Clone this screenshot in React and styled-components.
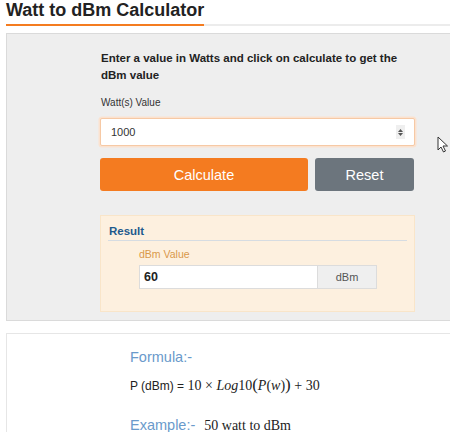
import React from "react";
import styled, { createGlobalStyle } from "styled-components";

const GlobalStyle = createGlobalStyle`
  html, body {
    margin: 0;
    padding: 0;
    background: #ffffff;
    overflow: hidden;
  }
  body {
    font-family: "Liberation Sans", Arial, sans-serif;
    color: #333;
  }
`;

const Page = styled.div`
  position: relative;
  width: 470px;
  height: 432px;
  overflow: hidden;
  padding-left: 6px;
`;

const Header = styled.div`
  border-bottom: 2px solid #ececec;
`;

const Title = styled.h2`
  display: inline-block;
  margin: 0 0 -2px;
  padding-bottom: 4px;
  font-size: 18px;
  line-height: 20px;
  font-weight: bold;
  color: #222;
  border-bottom: 2px solid #f47c20;
`;

const Panel = styled.section`
  margin-top: ${(p) => (p.$white ? "12px" : "7px")};
  background: ${(p) => (p.$white ? "#ffffff" : "#eeeeee")};
  border: 1px solid ${(p) => (p.$white ? "#e6e6e6" : "#dadada")};
  padding: ${(p) => (p.$white ? "14px 0 0 123px" : "16px 0 8px 93px")};
  min-height: ${(p) => (p.$white ? "120px" : "auto")};
`;

const Column = styled.div`
  width: 315px;
`;

const Intro = styled.p`
  margin: 0;
  font-size: 11.5px;
  line-height: 17px;
  font-weight: bold;
  color: #222;
  padding-left: 1px;
`;

const Label = styled.label`
  display: block;
  margin-top: 12px;
  padding-left: 1px;
  font-size: 10px;
  line-height: 14px;
  color: #333;
`;

const InputWrap = styled.div`
  margin-top: 8px;
  height: 28px;
  box-sizing: border-box;
  display: flex;
  align-items: center;
  background: #fff;
  border: 1px solid #f6c9a5;
  box-shadow: 0 0 0 1.5px #fbe2cf;
  border-radius: 2px;
  padding: 0 9px 0 10px;
`;

const TextInput = styled.input`
  flex: 1;
  min-width: 0;
  border: none;
  outline: none;
  background: transparent;
  font-family: inherit;
  font-size: 11px;
  color: #333;
  padding: 0;
`;

const Spinner = styled.span`
  width: 9px;
  height: 14px;
  background: #efefef;
  display: flex;
  flex-direction: column;
  align-items: center;
  justify-content: center;
  gap: 1px;
`;

const Buttons = styled.div`
  margin-top: 12px;
  display: grid;
  grid-template-columns: 208px 99px;
  gap: 7px;
`;

const Button = styled.button`
  height: 33px;
  border: none;
  border-radius: 3px;
  background: ${(p) => (p.$variant === "reset" ? "#6c757d" : "#f47b20")};
  color: #fff;
  font-family: inherit;
  font-size: 14.5px;
  cursor: pointer;
`;

const ResultBox = styled.div`
  margin-top: 24px;
  background: #fdf0df;
  border: 1px solid #f9e5c9;
  padding: 8px 7px 22px 7px;
`;

const Legend = styled.div`
  font-size: 11.5px;
  line-height: 14px;
  font-weight: bold;
  color: #1f5a8d;
  padding: 0 0 2px 1px;
  border-bottom: 1px solid #d6dce2;
`;

const ResultInner = styled.div`
  padding-left: 31px;
  width: 238px;
`;

const ResultLabel = styled.div`
  margin-top: 6px;
  font-size: 10.5px;
  line-height: 14px;
  color: #d9984a;
`;

const Group = styled.div`
  margin-top: 4px;
  display: flex;
  height: 24px;
`;

const Output = styled.div`
  flex: 1;
  background: #fff;
  border: 1px solid #dcdcdc;
  border-right: none;
  display: flex;
  align-items: center;
  padding-left: 4px;
  font-size: 12.5px;
  font-weight: bold;
  color: #222;
`;

const Addon = styled.div`
  width: 60px;
  box-sizing: border-box;
  background: #efefef;
  border: 1px solid #dcdcdc;
  display: flex;
  align-items: center;
  justify-content: center;
  font-size: 11px;
  color: #555;
`;

const Heading = styled.div`
  font-size: 14.5px;
  line-height: 18px;
  color: #6a9acb;
`;

const FormulaLine = styled.div`
  margin-top: 10px;
  display: flex;
  align-items: baseline;
  color: #222;
`;

const Sans = styled.span`
  font-size: 12px;
  white-space: pre;
`;

const MathText = styled.span`
  font-family: "Liberation Serif", "Times New Roman", serif;
  font-size: 14px;
  white-space: pre;
  i {
    font-style: italic;
  }
`;

const Paren = styled.span`
  font-size: 17px;
  line-height: 1;
`;

const ExampleRow = styled.div`
  margin-top: 22px;
  display: flex;
  align-items: baseline;
`;

const ExampleText = styled.span`
  font-family: "Liberation Serif", "Times New Roman", serif;
  font-size: 14px;
  color: #222;
  margin-left: 9px;
`;

const Cursor = styled.svg`
  position: absolute;
  left: 437px;
  top: 136px;
`;

const Arrow = ({ up }) => (
  <svg width="5" height="3" viewBox="0 0 5 3">
    <path d={up ? "M0 3 L2.5 0 L5 3 Z" : "M0 0 L2.5 3 L5 0 Z"} fill="#555" />
  </svg>
);

const App = () => {
  return (
    <Page>
      <GlobalStyle />
      <Header>
        <Title>Watt to dBm Calculator</Title>
      </Header>

      <Panel>
        <Column>
          <Intro>
            Enter a value in Watts and click on calculate to get the dBm value
          </Intro>
          <Label>Watt(s) Value</Label>
          <InputWrap>
            <TextInput defaultValue="1000" />
            <Spinner>
              <Arrow up />
              <Arrow />
            </Spinner>
          </InputWrap>
          <Buttons>
            <Button>Calculate</Button>
            <Button $variant="reset">Reset</Button>
          </Buttons>
          <ResultBox>
            <Legend>Result</Legend>
            <ResultInner>
              <ResultLabel>dBm Value</ResultLabel>
              <Group>
                <Output>60</Output>
                <Addon>dBm</Addon>
              </Group>
            </ResultInner>
          </ResultBox>
        </Column>
      </Panel>

      <Panel $white>
        <Heading>Formula:-</Heading>
        <FormulaLine>
          <Sans>P (dBm) = </Sans>
          <MathText>
            10 × <i>Log</i>10<Paren>(</Paren><i>P</i>(<i>w</i>)<Paren>)</Paren> + 30
          </MathText>
        </FormulaLine>
        <ExampleRow>
          <Heading as="span">Example:-</Heading>
          <ExampleText>50 watt to dBm</ExampleText>
        </ExampleRow>
      </Panel>

      <Cursor width="12" height="17" viewBox="0 0 12 17">
        <path
          d="M1 1 L1 14 L4 11 L6.5 16 L8.5 15 L6 10 L10.5 10 Z"
          fill="#fff"
          stroke="#333"
          strokeWidth="1"
          strokeLinejoin="round"
        />
      </Cursor>
    </Page>
  );
};

export default App;
